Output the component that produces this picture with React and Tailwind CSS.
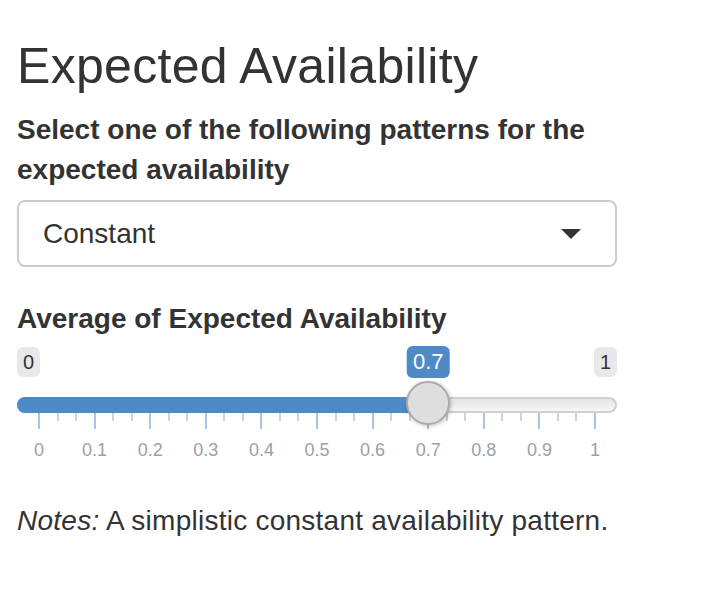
import { useState } from 'react';

const FONT = { fontFamily: '"Liberation Sans", Arial, sans-serif' };

// slider geometry (2x scale of the shiny ionRangeSlider skin)
const TRACK_W = 600;
const HANDLE = 44;
const USABLE = TRACK_W - HANDLE;

function posOf(v) {
  return HANDLE / 2 + v * USABLE;
}

function Grid() {
  const majors = Array.from({ length: 11 }, (_, i) => i / 10);
  const minors = [];
  for (let i = 0; i < 10; i++) {
    minors.push(i / 10 + 1 / 30, i / 10 + 2 / 30);
  }
  return (
    <div className="relative h-[54px]">
      {minors.map((m, i) => (
        <span
          key={'s' + i}
          className="absolute top-0 w-[2px] h-[8px] bg-[#d2d2d2]"
          style={{ left: posOf(m) - 1 }}
        />
      ))}
      {majors.map((m) => (
        <span
          key={'m' + m}
          className="absolute top-0 w-[2px] h-[16px] bg-[#a8c5e5]"
          style={{ left: posOf(m) - 1 }}
        />
      ))}
      {majors.map((m) => (
        <span
          key={'t' + m}
          className="absolute top-[28px] w-[60px] -ml-[30px] text-center text-[18px] leading-[18px] text-[#9aa1a9]"
          style={{ left: posOf(m) }}
        >
          {m === 0 ? '0' : m === 1 ? '1' : m.toFixed(1)}
        </span>
      ))}
    </div>
  );
}

function Slider({ value, min, max }) {
  const center = posOf(value);
  return (
    <div className="w-[600px] flex flex-col">
      {/* min / value / max labels */}
      <div className="relative flex justify-between items-start h-[50px]">
        <span className="px-[6px] py-[2px] rounded-[6px] bg-[#e8e8e8] text-[20px] leading-[26px] text-[#333]">
          {min}
        </span>
        <span
          className="absolute top-[-1px] -translate-x-1/2 px-[6px] py-[2px] rounded-[6px] bg-[#4f8ac8] text-[22px] leading-[28px] text-white"
          style={{ left: center }}
        >
          {value}
        </span>
        <span className="px-[6px] py-[2px] rounded-[6px] bg-[#e8e8e8] text-[20px] leading-[26px] text-[#333]">
          {max}
        </span>
      </div>

      {/* track */}
      <div className="relative h-[16px] rounded-[16px] border-2 border-[#d0d0d0] bg-gradient-to-b from-[#e4e4e4] to-[#f6f6f6]">
        <div
          className="absolute -left-[2px] -top-[2px] h-[16px] rounded-l-[16px] bg-[#4f8ac8]"
          style={{ width: center }}
        />
        <div
          className="absolute -top-[18px] w-[44px] h-[44px] -ml-[24px] rounded-full border-2 border-[#ababab] bg-[#dedede] shadow-[1px_1px_4px_rgba(0,0,0,0.25)] z-10"
          style={{ left: center }}
        />
      </div>

      <Grid />
    </div>
  );
}

export default function App() {
  const [pattern] = useState('Constant');

  return (
    <div className="min-h-screen bg-white text-[#333]" style={FONT}>
      <div className="w-[600px] ml-[17px] pt-[40px] flex flex-col">
        <h3 className="text-[50px] leading-[52px] font-normal tracking-[0.3px] mb-[18px]">
          Expected Availability
        </h3>

        {/* pattern select */}
        <label className="block text-[28px] leading-[40px] font-bold mb-[10px]">
          Select one of the following patterns for the expected availability
        </label>
        <div className="h-[67px] rounded-[8px] border-2 border-[#cccccc] flex items-center justify-between pl-[24px] pr-[34px] mb-[32px]">
          <span className="text-[28px] leading-[40px]">{pattern}</span>
          <span className="w-0 h-0 border-l-[10px] border-r-[10px] border-t-[10px] border-l-transparent border-r-transparent border-t-[#333]" />
        </div>

        {/* availability slider */}
        <label className="block text-[28px] leading-[40px] font-bold mb-[8px]">
          Average of Expected Availability
        </label>
        <Slider value={0.7} min={0} max={1} />

        <p className="mt-[34px] text-[28px] leading-[40px] tracking-[0.25px]">
          <em>Notes:</em> A simplistic constant availability pattern.
        </p>
      </div>
    </div>
  );
}
